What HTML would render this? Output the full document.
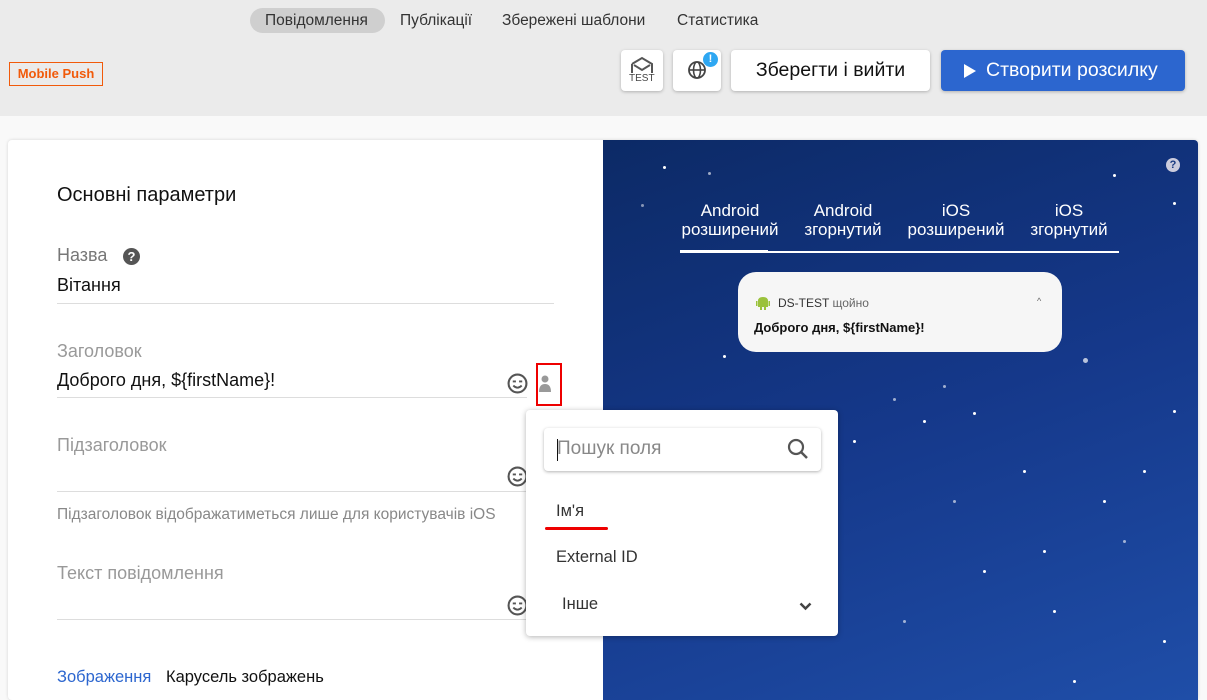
<!DOCTYPE html>
<html><head><meta charset="utf-8"><style>
*{box-sizing:border-box;margin:0;padding:0}
body{width:1207px;height:691px;overflow:hidden;background:#f9f9f9;font-family:"Liberation Sans",sans-serif;position:relative}
.hdr{position:absolute;left:0;top:0;width:1207px;height:116px;background:#ebebeb}
.nav{position:absolute;top:8px;font-size:15.5px;color:#333;height:25px;line-height:25px}
.abs{position:absolute}
.btn{position:absolute;top:50px;height:41px;background:#fff;border-radius:4px;box-shadow:0 1px 3px rgba(0,0,0,.25)}
.card{position:absolute;left:8px;top:140px;width:1190px;height:560px;background:#fff;border-radius:4px;box-shadow:0 0 3px rgba(0,0,0,.15);overflow:hidden}
.lbl{position:absolute;left:57px;font-size:18px;color:#777}
.val{position:absolute;left:57px;font-size:18px;color:#111}
.line{position:absolute;left:57px;width:497px;height:1px;background:#ddd}
.sm{position:absolute;font-size:15px;color:#333}
.star{position:absolute;width:3px;height:3px;border-radius:50%;background:#fff}
.smile{position:absolute;width:21px;height:21px}
.tab{position:absolute;top:201px;text-align:center;color:#fff;font-size:17px;line-height:19px}
</style></head><body>
<div class="hdr"></div>
<div class="abs" style="left:250px;top:8px;width:135px;height:25px;border-radius:13px;background:#cfcfcf"></div>
<div class="nav" style="left:265px">Повідомлення</div>
<div class="nav" style="left:400px">Публікації</div>
<div class="nav" style="left:502px">Збережені шаблони</div>
<div class="nav" style="left:677px">Статистика</div>
<div class="abs" style="left:9px;top:62px;width:94px;height:24px;border:1px solid #f15a0a;color:#f15a0a;font-weight:bold;font-size:13px;line-height:22px;text-align:center">Mobile Push</div>

<div class="btn" style="left:621px;width:42px">
<svg class="abs" style="left:9px;top:6px" width="24" height="18" viewBox="0 0 24 18"><path d="M2 8 L12 2 L22 8 V17 M2 8 V17 M4 9 L12 14 L20 9" fill="none" stroke="#555" stroke-width="2"/></svg>
<div class="abs" style="left:8px;top:23px;font-size:10px;color:#444">TEST</div></div>
<div class="btn" style="left:673px;width:48px">
<svg class="abs" style="left:14px;top:10px" width="20" height="20" viewBox="0 0 20 20"><circle cx="10" cy="10" r="8" fill="none" stroke="#444" stroke-width="1.8"/><ellipse cx="10" cy="10" rx="3.5" ry="8" fill="none" stroke="#444" stroke-width="1.6"/><path d="M2 10H18" stroke="#444" stroke-width="1.6"/></svg>
<div class="abs" style="left:30px;top:2px;width:15px;height:15px;border-radius:50%;background:#2ea7f2;color:#fff;font-size:11px;font-weight:bold;text-align:center;line-height:15px">!</div></div>
<div class="btn" style="left:731px;width:199px;font-size:19.5px;color:#111;text-align:center;line-height:41px">Зберегти і вийти</div>
<div class="btn" style="left:941px;width:244px;background:#2c66cf;color:#fff;font-size:19.5px;line-height:41px;padding-left:45px">Створити розсилку
<svg class="abs" style="left:23px;top:14px" width="12" height="14"><path d="M0 0L12 7L0 14Z" fill="#fff"/></svg></div>

<div class="card"></div>
<div class="abs" style="left:57px;top:184px;font-size:20px;color:#111">Основні параметри</div>
<div class="lbl" style="top:245px">Назва</div>
<div class="abs" style="left:123px;top:248px;width:17px;height:17px;border-radius:50%;background:#555;color:#fff;font-size:13px;font-weight:bold;text-align:center;line-height:17px">?</div>
<div class="val" style="top:275px">Вітання</div>
<div class="line" style="top:303px"></div>
<div class="lbl" style="top:341px;color:#999">Заголовок</div>
<div class="val" style="top:370px">Доброго дня, ${firstName}!</div>
<div class="line" style="top:397px;width:470px"></div>
<div class="lbl" style="top:435px;color:#999">Підзаголовок</div>
<div class="line" style="top:491px;width:470px"></div>
<div class="abs" style="left:57px;top:506px;font-size:15.5px;color:#888">Підзаголовок відображатиметься лише для користувачів iOS</div>
<div class="lbl" style="top:563px;color:#999">Текст повідомлення</div>
<div class="line" style="top:619px;width:470px"></div>
<div class="abs" style="left:57px;top:668px;font-size:16.5px;color:#2c66cf">Зображення</div>
<div class="abs" style="left:166px;top:668px;font-size:16.5px;color:#111">Карусель зображень</div>

<svg class="smile" style="left:507px;top:373px" viewBox="0 0 20 20"><circle cx="10" cy="10" r="8.5" fill="none" stroke="#555" stroke-width="2"/><path d="M5.5 8h3M11.5 8h3M6 12q4 4 8 0" fill="none" stroke="#555" stroke-width="1.8"/></svg>
<svg class="smile" style="left:507px;top:466px" viewBox="0 0 20 20"><circle cx="10" cy="10" r="8.5" fill="none" stroke="#555" stroke-width="2"/><path d="M5.5 8h3M11.5 8h3M6 12q4 4 8 0" fill="none" stroke="#555" stroke-width="1.8"/></svg>
<svg class="smile" style="left:507px;top:595px" viewBox="0 0 20 20"><circle cx="10" cy="10" r="8.5" fill="none" stroke="#555" stroke-width="2"/><path d="M5.5 8h3M11.5 8h3M6 12q4 4 8 0" fill="none" stroke="#555" stroke-width="1.8"/></svg>
<div class="abs" style="left:536px;top:363px;width:26px;height:43px;border:2px solid #e00"></div>
<svg class="abs" style="left:539px;top:375px" width="12" height="18" viewBox="0 0 12 18"><circle cx="6" cy="4" r="3.5" fill="#999"/><path d="M0 17Q0 9 6 9Q12 9 12 17Z" fill="#999"/></svg>

<div class="abs" style="left:603px;top:140px;width:595px;height:560px;background:linear-gradient(160deg,#0c2a66 0%,#15388a 50%,#1f4ea8 100%);border-radius:0 4px 0 0;overflow:hidden">
<div class="star" style="left:60px;top:26px"></div><div class="star" style="left:105px;top:32px;opacity:.6"></div>
<div class="star" style="left:38px;top:64px;opacity:.5"></div><div class="star" style="left:635px;top:32px"></div>
<div class="star" style="left:510px;top:34px"></div><div class="star" style="left:570px;top:62px"></div>
<div class="star" style="left:480px;top:218px;width:5px;height:5px;opacity:.7"></div>
<div class="star" style="left:120px;top:215px"></div><div class="star" style="left:200px;top:278px"></div>
<div class="star" style="left:290px;top:258px;opacity:.6"></div><div class="star" style="left:340px;top:245px;opacity:.6"></div>
<div class="star" style="left:370px;top:272px"></div><div class="star" style="left:320px;top:280px"></div>
<div class="star" style="left:540px;top:330px"></div><div class="star" style="left:350px;top:360px;opacity:.6"></div>
<div class="star" style="left:420px;top:330px"></div><div class="star" style="left:380px;top:430px"></div>
<div class="star" style="left:450px;top:470px"></div><div class="star" style="left:520px;top:400px;opacity:.6"></div>
<div class="star" style="left:560px;top:500px"></div><div class="star" style="left:300px;top:480px;opacity:.6"></div>
<div class="star" style="left:470px;top:540px"></div><div class="star" style="left:570px;top:270px"></div>
<div class="star" style="left:250px;top:300px"></div><div class="star" style="left:30px;top:280px;opacity:.5"></div>
<div class="star" style="left:440px;top:410px"></div><div class="star" style="left:500px;top:360px"></div>
</div>
<div class="abs" style="left:1166px;top:158px;width:14px;height:14px;border-radius:50%;background:#ccd;color:#1a3a80;font-size:11px;font-weight:bold;text-align:center;line-height:14px">?</div>
<div class="tab" style="left:676px;width:108px">Android<br>розширений</div>
<div class="tab" style="left:798px;width:90px">Android<br>згорнутий</div>
<div class="tab" style="left:901px;width:110px">iOS<br>розширений</div>
<div class="tab" style="left:1023px;width:92px">iOS<br>згорнутий</div>
<div class="abs" style="left:680px;top:251px;width:439px;height:2px;background:#fff"></div>
<div class="abs" style="left:680px;top:250px;width:88px;height:3px;background:#fff"></div>
<div class="abs" style="left:738px;top:272px;width:324px;height:80px;background:#f6f6f6;border-radius:18px"></div>
<svg class="abs" style="left:756px;top:295px" width="14" height="16" viewBox="0 0 14 16"><path d="M2 6h10v6H2z M2 6q0-4 5-4q5 0 5 4z M0 6h1.5v5H0z M12.5 6H14v5h-1.5z M4 12h2v3H4z M8 12h2v3H8z" fill="#9bc23c"/></svg>
<div class="abs" style="left:778px;top:296px;font-size:12px;color:#333">DS-TEST <span style="color:#666">щойно</span></div>
<div class="abs" style="left:1037px;top:296px;font-size:9px;color:#666">^</div>
<div class="abs" style="left:754px;top:320px;font-size:13px;color:#111;font-weight:bold">Доброго дня, ${firstName}!</div>

<div class="abs" style="left:526px;top:410px;width:312px;height:226px;background:#fff;border-radius:4px;box-shadow:0 1px 6px rgba(0,0,0,.3)"></div>
<div class="abs" style="left:544px;top:428px;width:277px;height:43px;background:#fff;border-radius:4px;box-shadow:0 1px 3px rgba(0,0,0,.3)"></div>
<div class="abs" style="left:557px;top:439px;width:1px;height:22px;background:#111"></div>
<div class="abs" style="left:557px;top:438px;font-size:19px;color:#888">Пошук поля</div>
<svg class="abs" style="left:787px;top:438px" width="22" height="22" viewBox="0 0 22 22"><circle cx="9" cy="9" r="7" fill="none" stroke="#555" stroke-width="2.2"/><path d="M14 14L20 20" stroke="#555" stroke-width="2.5"/></svg>
<div class="sm" style="left:556px;top:502px;font-size:16.5px">Ім'я</div>
<div class="abs" style="left:545px;top:527px;width:63px;height:3px;background:#e00;border-radius:2px"></div>
<div class="sm" style="left:556px;top:548px;font-size:16.5px">External ID</div>
<div class="sm" style="left:562px;top:595px;font-size:16.5px">Інше</div>
<svg class="abs" style="left:799px;top:602px" width="13" height="9" viewBox="0 0 13 9"><path d="M1.5 1.5L6.5 6.5L11.5 1.5" fill="none" stroke="#444" stroke-width="2.5"/></svg>
</body></html>
